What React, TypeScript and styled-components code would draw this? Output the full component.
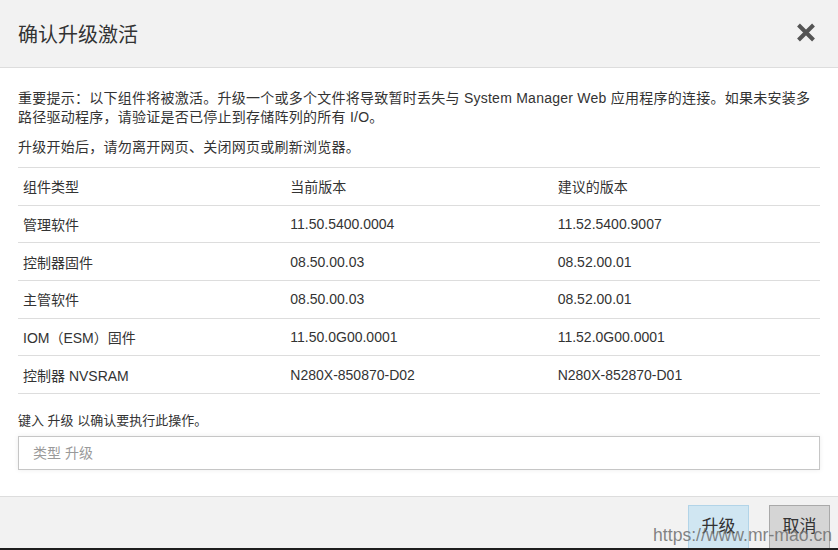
import {FC} from "react";
import styled, {createGlobalStyle} from "styled-components";

const GlobalStyle = createGlobalStyle`
  html, body {
    margin: 0;
    padding: 0;
    background: #ffffff;
  }
  body {
    font-family: "Liberation Sans", Arial, "Noto Sans CJK SC", sans-serif;
    color: #333333;
  }
  * {
    box-sizing: border-box;
  }
`;

const Dialog = styled.div`
  position: relative;
  display: flex;
  flex-direction: column;
  width: 838px;
  height: 550px;
  overflow: hidden;
  background: #ffffff;
`;

const Header = styled.div`
  display: flex;
  align-items: center;
  justify-content: space-between;
  height: 68px;
  flex-shrink: 0;
  padding: 0 20px 0 18px;
  background: #f2f2f2;
  border-bottom: 1px solid #dddddd;
`;

const Title = styled.h2`
  margin: 0;
  font-size: 20px;
  font-weight: normal;
  color: #333333;
`;

const CloseButton = styled.button`
  display: flex;
  align-items: center;
  justify-content: center;
  width: 24px;
  height: 24px;
  padding: 0;
  margin-top: -2px;
  border: none;
  background: transparent;
  cursor: pointer;
`;

const Body = styled.div`
  padding: 21px 18px 26px;
  flex-shrink: 0;
`;

const Notice = styled.p<{$gap?: number}>`
  margin: ${(props) => props.$gap ?? 0}px 0 0;
  font-size: 14px;
  line-height: 19px;
  letter-spacing: 0.25px;
`;

const Table = styled.table`
  width: 100%;
  margin-top: 10px;
  border-collapse: collapse;
  table-layout: fixed;
  font-size: 14px;
`;

const HeadCell = styled.th`
  height: 37.67px;
  padding: 0 5px;
  text-align: left;
  font-weight: normal;
  border-top: 1px solid #dddddd;
`;

const Row = styled.tr`
  &:last-child td {
    border-bottom: 1px solid #dddddd;
  }
`;

const Cell = styled.td`
  height: 37.67px;
  padding: 0 5px;
  border-top: 1px solid #dddddd;
`;

const ConfirmLabel = styled.label`
  display: block;
  margin-top: 18px;
  font-size: 13px;
  line-height: 18px;
`;

const ConfirmInput = styled.input`
  display: block;
  width: 100%;
  height: 34px;
  margin-top: 6px;
  padding: 0 14px;
  border: 1px solid #c6c6c6;
  box-shadow: 0 0 5px rgba(0, 0, 0, 0.08);
  font-family: inherit;
  font-size: 14px;
  color: #333333;
  outline: none;

  &::placeholder {
    color: #9a9a9a;
  }
`;

const Footer = styled.div`
  flex: 1;
  display: flex;
  justify-content: flex-end;
  align-items: flex-start;
  gap: 20px;
  padding: 8px 8px 0 0;
  background: #f2f2f2;
  border-top: 1px solid #dddddd;
  border-bottom: 2px solid #1e1e1e;
  overflow: hidden;
`;

const FooterButton = styled.button<{$primary?: boolean}>`
  width: 61px;
  height: 44px;
  padding: 0 0 4px;
  font-family: inherit;
  font-size: 17px;
  color: #333333;
  background: ${(props) => (props.$primary ? "#d0e6f2" : "#d5d5d5")};
  border: 1px solid ${(props) => (props.$primary ? "#b2d4e8" : "#a9a9a9")};
  cursor: pointer;
`;

const Watermark = styled.div`
  position: absolute;
  right: 6px;
  bottom: 4px;
  font-family: "Liberation Sans", Arial, sans-serif;
  font-size: 17.6px;
  color: rgba(110, 110, 110, 0.85);
  pointer-events: none;
`;

interface Component {
  type: string;
  current: string;
  proposed: string;
}

const components: Component[] = [
  {type: "管理软件", current: "11.50.5400.0004", proposed: "11.52.5400.9007"},
  {type: "控制器固件", current: "08.50.00.03", proposed: "08.52.00.01"},
  {type: "主管软件", current: "08.50.00.03", proposed: "08.52.00.01"},
  {type: "IOM（ESM）固件", current: "11.50.0G00.0001", proposed: "11.52.0G00.0001"},
  {type: "控制器 NVSRAM", current: "N280X-850870-D02", proposed: "N280X-852870-D01"},
];

const CloseIcon: FC = () => (
  <svg width="20" height="19" viewBox="0 0 20 19">
    <path d="M2.5 2 L17.5 17 M17.5 2 L2.5 17" stroke="#555555" strokeWidth="4" strokeLinecap="butt" />
  </svg>
);

const App: FC = () => {
  return (
    <>
      <GlobalStyle />
      <Dialog>
        <Header>
          <Title>确认升级激活</Title>
          <CloseButton aria-label="关闭">
            <CloseIcon />
          </CloseButton>
        </Header>

        <Body>
          <Notice>
            重要提示：以下组件将被激活。升级一个或多个文件将导致暂时丢失与 System Manager Web 应用程序的连接。如果未安装多路径驱动程序，请验证是否已停止到存储阵列的所有 I/O。
          </Notice>
          <Notice $gap={11}>升级开始后，请勿离开网页、关闭网页或刷新浏览器。</Notice>

          <Table>
            <thead>
              <tr>
                <HeadCell>组件类型</HeadCell>
                <HeadCell>当前版本</HeadCell>
                <HeadCell>建议的版本</HeadCell>
              </tr>
            </thead>
            <tbody>
              {components.map((c) => (
                <Row key={c.type}>
                  <Cell>{c.type}</Cell>
                  <Cell>{c.current}</Cell>
                  <Cell>{c.proposed}</Cell>
                </Row>
              ))}
            </tbody>
          </Table>

          <ConfirmLabel htmlFor="confirm">键入 升级 以确认要执行此操作。</ConfirmLabel>
          <ConfirmInput id="confirm" placeholder="类型 升级" />
        </Body>

        <Footer>
          <FooterButton $primary>升级</FooterButton>
          <FooterButton>取消</FooterButton>
        </Footer>

        <Watermark>https://www.mr-mao.cn</Watermark>
      </Dialog>
    </>
  );
};

export default App;
